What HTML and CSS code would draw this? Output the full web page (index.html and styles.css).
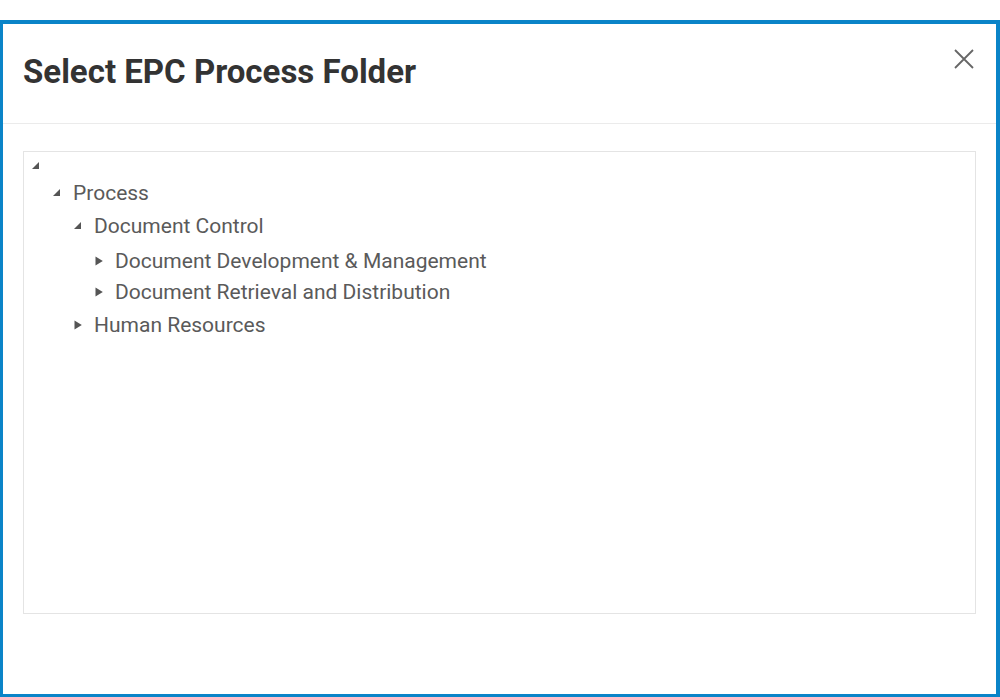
FILE: index.html
```html
<!DOCTYPE html>
<html>
<head>
<meta charset="utf-8">
<link rel="stylesheet" href="styles.css">
</head>
<body>
<div class="modal">
  <div class="modal-header">
    <h1 class="modal-title">Select EPC Process Folder</h1>
    <button class="close-btn" aria-label="Close">
      <svg width="20" height="20" viewBox="0 0 20 20"><path d="M1 1L19 19M19 1L1 19" stroke="#666" stroke-width="1.8" fill="none"/></svg>
    </button>
  </div>
  <div class="modal-body">
    <div class="tree">
      <ul class="tree-list">
        <li>
          <div class="row root-row"><span class="tog"><svg width="7" height="7" viewBox="0 0 7 7"><path d="M7 0V7H0Z" fill="#555"/></svg></span></div>
          <ul class="tree-list">
            <li>
              <div class="row"><span class="tog"><svg width="7" height="7" viewBox="0 0 7 7"><path d="M7 0V7H0Z" fill="#555"/></svg></span><span class="label">Process</span></div>
              <ul class="tree-list">
                <li>
                  <div class="row"><span class="tog"><svg width="7" height="7" viewBox="0 0 7 7"><path d="M7 0V7H0Z" fill="#555"/></svg></span><span class="label">Document Control</span></div>
                  <ul class="tree-list">
                    <li><div class="row dd"><span class="tog"><svg width="8" height="10" viewBox="0 0 8 10"><path d="M0.5 0.5L7.8 5L0.5 9.5Z" fill="#555"/></svg></span><span class="label">Document Development &amp; Management</span></div></li>
                    <li><div class="row"><span class="tog"><svg width="8" height="10" viewBox="0 0 8 10"><path d="M0.5 0.5L7.8 5L0.5 9.5Z" fill="#555"/></svg></span><span class="label">Document Retrieval and Distribution</span></div></li>
                  </ul>
                </li>
                <li><div class="row"><span class="tog"><svg width="8" height="10" viewBox="0 0 8 10"><path d="M0.5 0.5L7.8 5L0.5 9.5Z" fill="#555"/></svg></span><span class="label">Human Resources</span></div></li>
              </ul>
            </li>
          </ul>
        </li>
      </ul>
    </div>
  </div>
</div>
</body>
</html>
```

FILE: styles.css
```css
html, body {
  margin: 0;
  padding: 0;
  background: #ffffff;
}
body {
  padding-top: 20px;
  font-family: Roboto, "Liberation Sans", Arial, sans-serif;
}
.modal {
  box-sizing: border-box;
  height: 677px;
  width: 1000px;
  border: 3px solid #0a84c8;
  border-top-width: 4px;
  border-right-width: 4px;
  background: #ffffff;
  display: flex;
  flex-direction: column;
}
.modal-header {
  height: 100px;
  border-bottom: 1px solid #ebebeb;
  display: flex;
  align-items: flex-start;
  justify-content: space-between;
  padding: 0 22px 0 20px;
  box-sizing: border-box;
}
.modal-title {
  margin: 28px 0 0 0;
  font-size: 33px;
  font-weight: 700;
  color: #333333;
  line-height: 40px;
}
.close-btn {
  margin-top: 25px;
  border: 0;
  background: transparent;
  padding: 0;
  width: 20px;
  height: 20px;
  cursor: pointer;
}
.close-btn svg { display: block; }
.modal-body {
  padding: 27px 20px 0 20px;
}
.tree {
  box-sizing: border-box;
  height: 463px;
  border: 1px solid #e4e4e4;
  padding-top: 2px;
  color: #5a5a5a;
  font-size: 21px;
}
.tree-list {
  list-style: none;
  margin: 0;
  padding: 0;
}
.tree-list .tree-list {
  padding-left: 21px;
}
.row {
  display: flex;
  align-items: center;
  height: 33px;
  padding-left: 8px;
}
.row.dd {
  height: 33px;
  padding-top: 4px;
  box-sizing: border-box;
}
.root-row {
  height: 22px;
}
.tog {
  width: 13px;
  flex: none;
  display: flex;
  align-items: center;
}
.tog svg { display: block; }
.label {
  padding-left: 7px;
  line-height: 24px;
}
```
